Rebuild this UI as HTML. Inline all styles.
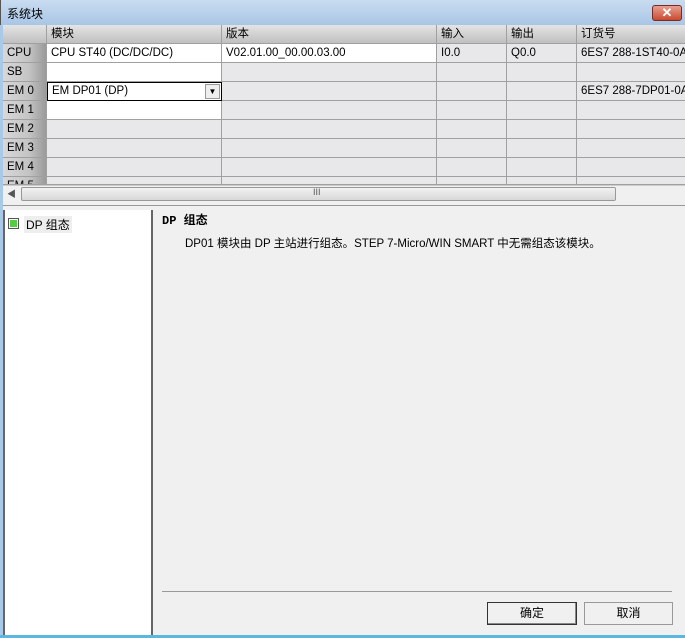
<!DOCTYPE html>
<html><head><meta charset="utf-8"><style>
*{margin:0;padding:0;box-sizing:border-box}
body{width:685px;height:638px;background:#f0f0f0;position:relative;overflow:hidden;font-family:"Liberation Sans","Noto Sans CJK SC",sans-serif;font-size:12px;color:#000}
.a{position:absolute}
.title{left:0;top:0;width:685px;height:25px;background:linear-gradient(#c9dcf0,#a9c6e6);border-left:1px solid #555;}
.cell{position:absolute;border-right:1px solid #a0a0a0;border-bottom:1px solid #a0a0a0;padding-left:4px;line-height:18px;white-space:nowrap;overflow:hidden;font-size:11.5px}
.rh{background:linear-gradient(90deg,#d8d8d8,#c4c4c4 60%,#9a9a9a);color:#000}
.hd{background:linear-gradient(#e4e4e4,#c0c0c0);}
</style></head><body>
<div class="a title"><span class="a" style="left:6px;top:5px;font-size:12px">系统块</span>
<div class="a" style="left:651px;top:5px;width:30px;height:16px;border:1px solid #7a2a20;border-radius:3px;background:linear-gradient(#e8a090,#c84a30);color:#fff;font-weight:bold;text-align:center;line-height:14px;font-size:13px">✕</div></div>
<div class="a" style="left:0;top:25px;width:3px;height:613px;background:#aac8e8"></div>
<div class="a" style="left:3px;top:25px;width:682px;height:160px;background:#e8e8ea" id="g"></div>
<div class="a" style="left:0;top:635px;width:685px;height:3px;background:#5bb6e0"></div>
<div class="a" style="left:3px;top:185px;width:682px;height:17px;background:#f0f0f0;border-top:1px solid #ccc"></div>
<div class="a" style="left:21px;top:187px;width:595px;height:14px;border:1px solid #999;border-radius:2px;background:linear-gradient(#f2f2f2,#d8d8d8)"><span class="a" style="left:291px;top:-1px;font-size:9px;color:#555">III</span></div>
<span class="a" style="left:7px;top:187px;font-size:9px;color:#555">◀</span>
<div class="a" style="left:3px;top:205px;width:682px;height:1px;background:#999"></div>
<div class="a" style="left:3px;top:210px;width:150px;height:425px;background:#fff;border-left:2px solid #666;border-right:2px solid #666"></div>
<div class="a" style="left:8px;top:218px;width:11px;height:11px;border:1px solid #555;background:#fff"><div style="margin:1px;width:7px;height:7px;background:#5c4"></div></div>
<span class="a" style="left:24px;top:216px;background:#eee;padding:0 2px">DP 组态</span>
<span class="a" style="left:162px;top:211px;font-weight:bold;font-family:'Liberation Mono','Noto Sans CJK SC',monospace">DP 组态</span>
<span class="a" style="left:185px;top:235px;font-size:11.5px">DP01 模块由 DP 主站进行组态。STEP 7-Micro/WIN SMART 中无需组态该模块。</span>
<div class="a" style="left:162px;top:591px;width:510px;height:1px;background:#999"></div>
<div class="a" style="left:487px;top:602px;width:90px;height:23px;border:1px solid #333;background:#f0f0f0;text-align:center;line-height:21px;box-shadow:inset -1px -1px #888">确定</div>
<div class="a" style="left:584px;top:602px;width:89px;height:23px;border:1px solid #999;background:#f0f0f0;text-align:center;line-height:21px">取消</div>
<script>
const cols=[3,47,222,437,507,577,700];
const heads=["","模块","版本","输入","输出","订货号"];
const rows=[["CPU","CPU ST40 (DC/DC/DC)","V02.01.00_00.00.03.00","I0.0","Q0.0","6ES7 288-1ST40-0AA0"],["SB","","","","",""],["EM 0","","","","","6ES7 288-7DP01-0AA0"],["EM 1","","","","",""],["EM 2","","","","",""],["EM 3","","","","",""],["EM 4","","","","",""],["EM 5","","","","",""]];
let h="";
for(let c=0;c<6;c++)h+=`<div class="cell hd" style="left:${cols[c]}px;top:25px;width:${cols[c+1]-cols[c]}px;height:19px">${heads[c]}</div>`;
rows.forEach((r,i)=>{let y=44+i*19;let hh=i==7?8:19;
for(let c=0;c<6;c++){let bg=c==0?'':(((i==0&&c<=2)||(i<=3&&c==1))?'background:#fff;':'');
h+=`<div class="cell ${c==0?'rh':''}" style="left:${cols[c]}px;top:${y}px;width:${cols[c+1]-cols[c]}px;height:${hh}px;${bg}">${r[c]}</div>`;}});
h+=`<div class="a" style="left:47px;top:82px;width:175px;height:19px;border:1px solid #000;background:#fff;padding-left:4px;line-height:17px;font-size:11.5px">EM DP01 (DP)<div class="a" style="left:157px;top:1px;width:15px;height:15px;border:1px solid #999;background:#eee;font-size:8px;text-align:center;line-height:14px">▼</div></div>`;
document.body.insertAdjacentHTML('beforeend',h);
</script>
</body></html>
